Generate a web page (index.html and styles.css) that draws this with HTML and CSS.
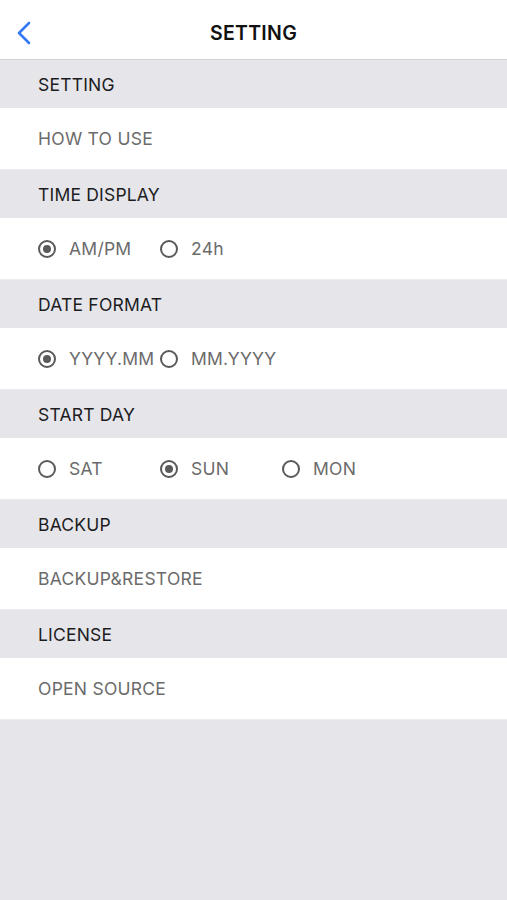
FILE: index.html
```html
<!DOCTYPE html>
<html>
<head>
<meta charset="utf-8">
<link rel="stylesheet" href="styles.css">
</head>
<body>
<div class="app">
  <header class="nav">
    <svg class="back" width="16" height="24" viewBox="0 0 16 24"><path d="M13 2 L3 12 L13 22" fill="none" stroke="#3478f6" stroke-width="2.6" stroke-linecap="round" stroke-linejoin="round"/></svg>
    <div class="title">SETTING</div>
  </header>
  <div class="section">SETTING</div>
  <div class="row">HOW TO USE</div>
  <div class="section">TIME DISPLAY</div>
  <div class="row radios">
    <div class="opt"><span class="radio on"></span>AM/PM</div>
    <div class="opt"><span class="radio"></span>24h</div>
  </div>
  <div class="section">DATE FORMAT</div>
  <div class="row radios">
    <div class="opt"><span class="radio on"></span>YYYY.MM</div>
    <div class="opt"><span class="radio"></span>MM.YYYY</div>
  </div>
  <div class="section">START DAY</div>
  <div class="row radios">
    <div class="opt"><span class="radio"></span>SAT</div>
    <div class="opt"><span class="radio on"></span>SUN</div>
    <div class="opt"><span class="radio"></span>MON</div>
  </div>
  <div class="section">BACKUP</div>
  <div class="row">BACKUP&amp;RESTORE</div>
  <div class="section">LICENSE</div>
  <div class="row">OPEN SOURCE</div>
</div>
</body>
</html>
```
FILE: styles.css
```css
html, body {
  margin: 0;
  padding: 0;
  background: #e5e5ea;
  font-family: Inter, "Liberation Sans", sans-serif;
}
.app {
  width: 507px;
  min-height: 900px;
  background: #e5e5ea;
}
.nav {
  height: 59px;
  background: #fff;
  border-bottom: 1px solid #d2d2d6;
  display: flex;
  align-items: center;
  justify-content: center;
  position: relative;
  box-sizing: content-box;
}
.back {
  position: absolute;
  left: 16px;
  top: 21px;
}
.title {
  font-size: 19.5px;
  font-weight: 600;
  color: #111;
  letter-spacing: 0.3px;
  padding-top: 7px;
}
.section {
  height: 48px;
  display: flex;
  align-items: center;
  padding-left: 38px;
  font-size: 17.5px;
  letter-spacing: 0.2px;
  color: #1c1c1e;
}
.row {
  height: 61px;
  border-bottom: 1px solid #ececf0;
  background: #fff;
  display: flex;
  align-items: center;
  padding-left: 38px;
  font-size: 17.5px;
  letter-spacing: 0.25px;
  color: #6b6b6b;
}
.opt {
  width: 122px;
  display: flex;
  align-items: center;
  white-space: nowrap;
}
.radio {
  width: 14px;
  height: 14px;
  border: 2px solid #5a5a5a;
  border-radius: 50%;
  margin-right: 13px;
  box-sizing: content-box;
  display: inline-flex;
  align-items: center;
  justify-content: center;
  flex: none;
}
.radio.on::after {
  content: "";
  width: 8px;
  height: 8px;
  border-radius: 50%;
  background: #5a5a5a;
}
```
